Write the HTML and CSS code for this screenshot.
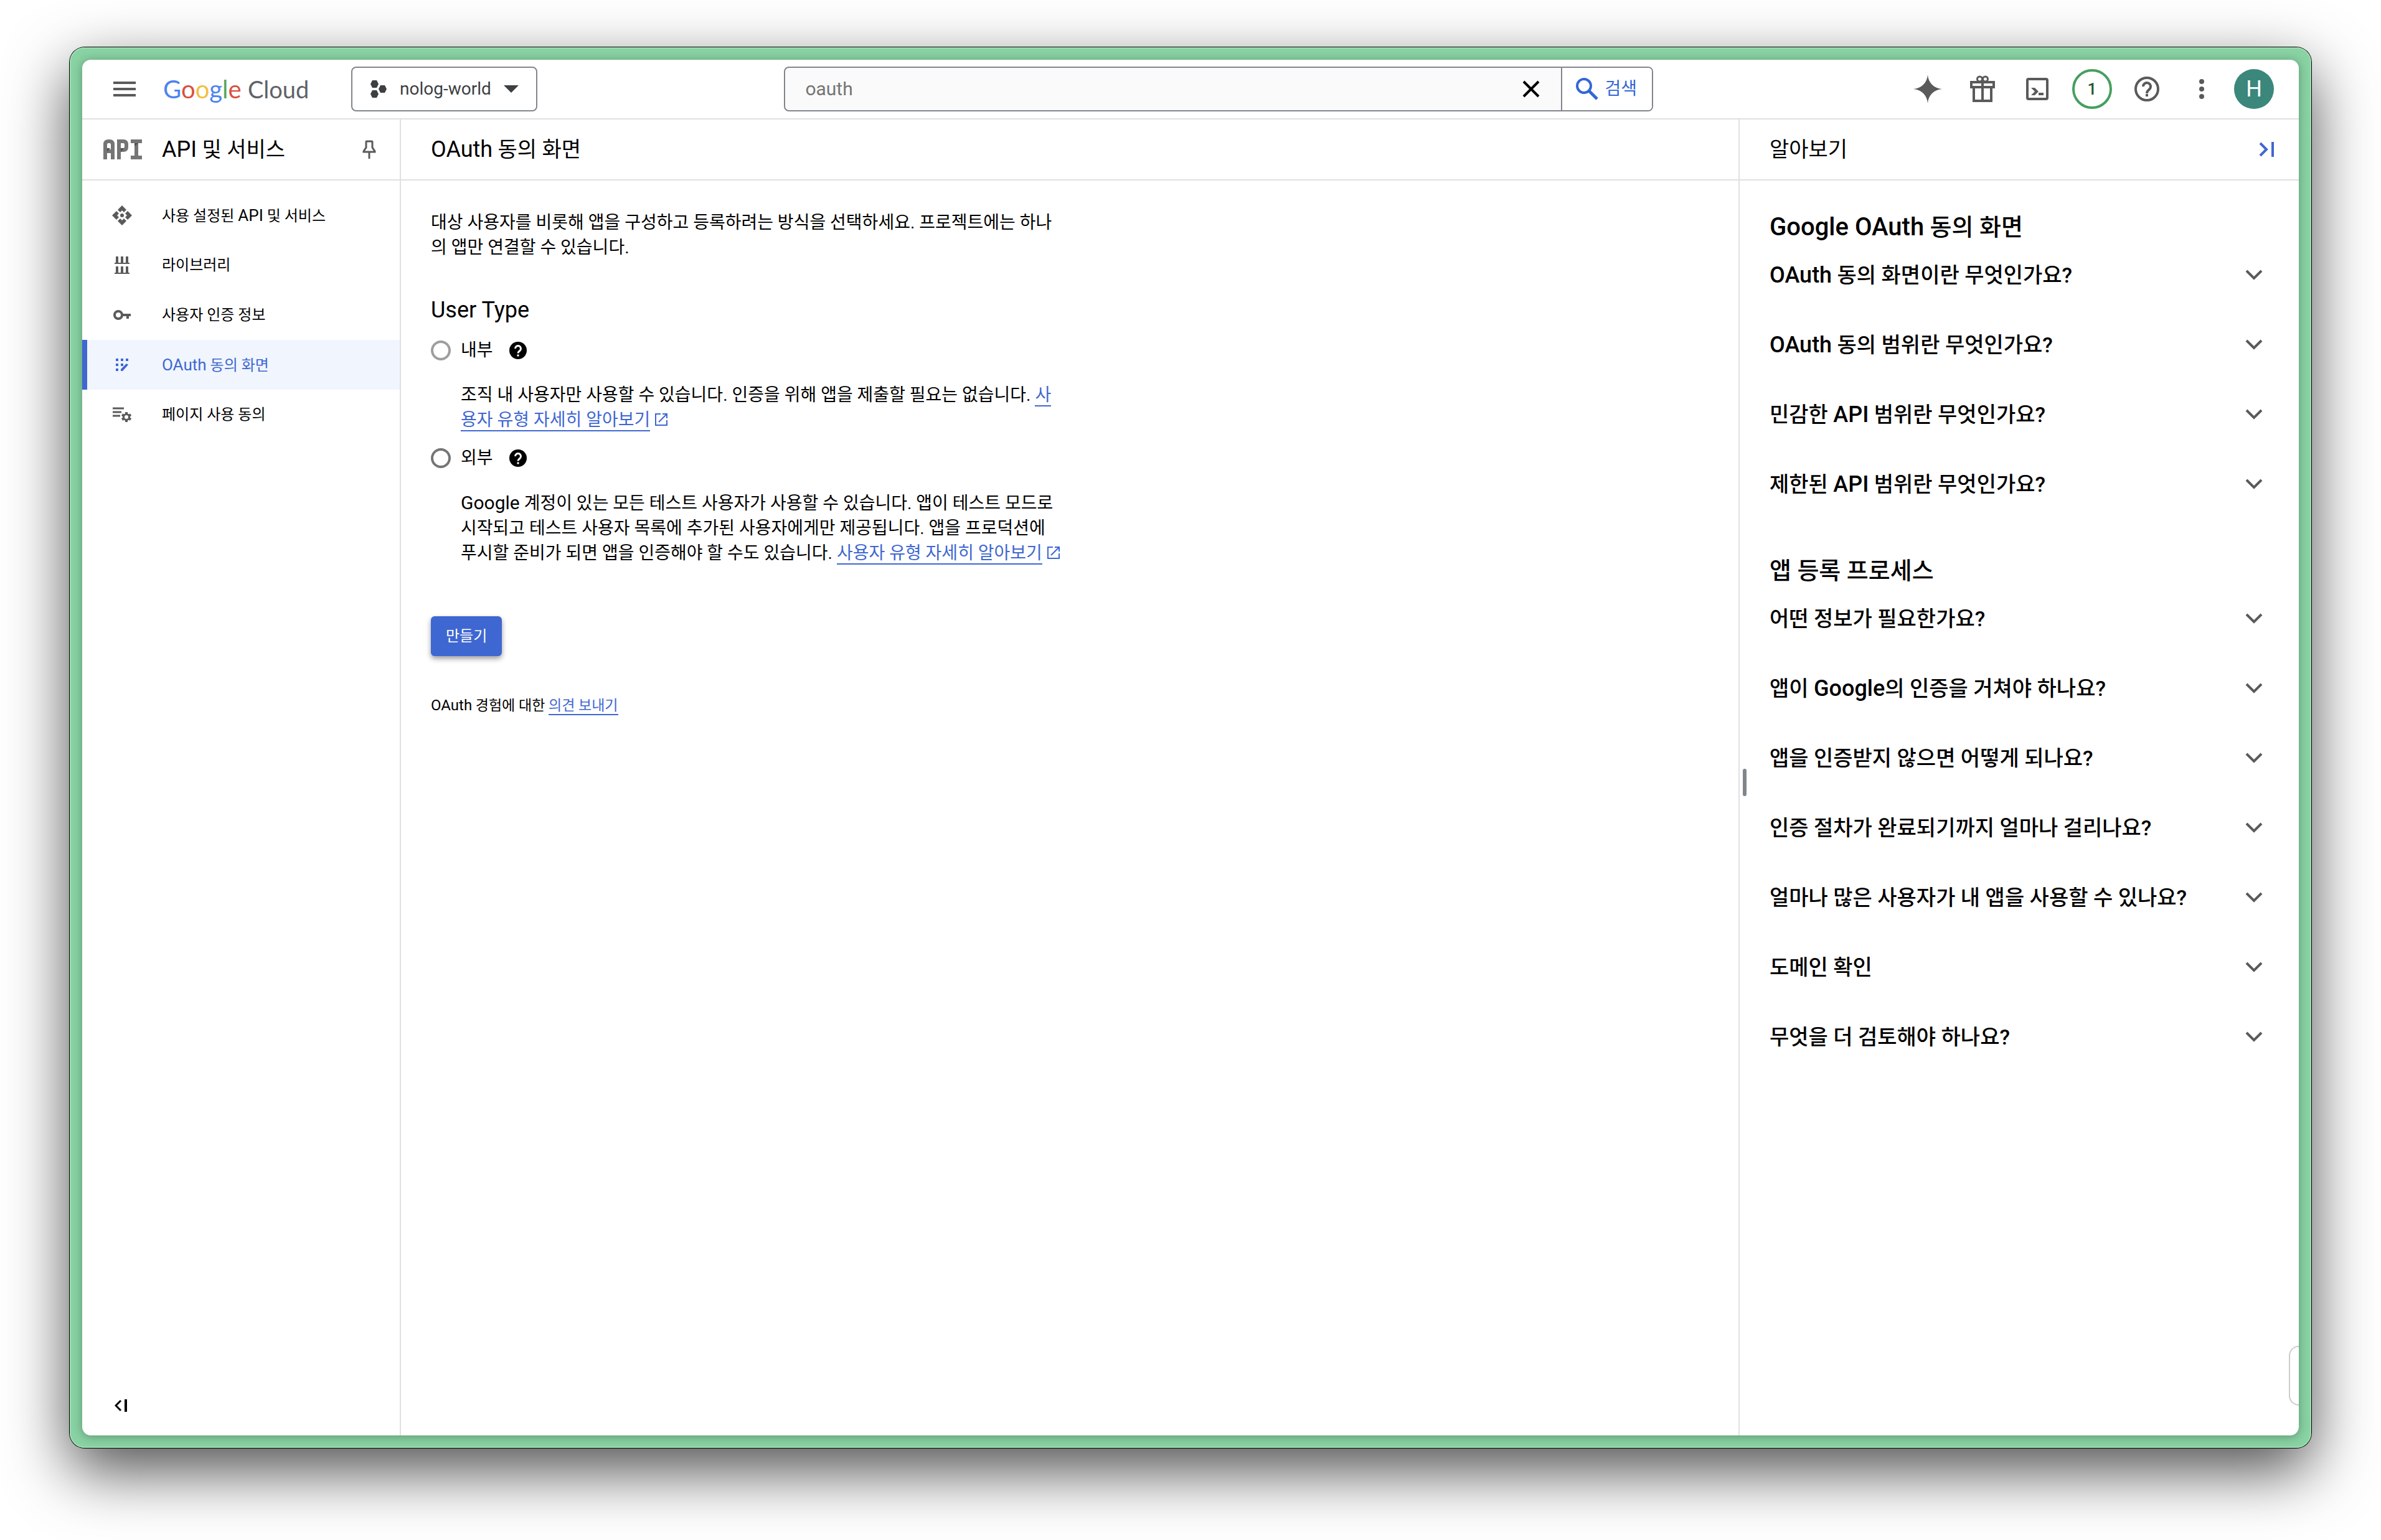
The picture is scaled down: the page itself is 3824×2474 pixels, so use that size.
FILE: index.html
```html
<!DOCTYPE html>
<html lang="ko">
<head>
<meta charset="utf-8">
<meta name="viewport" content="width=device-width, initial-scale=1">
<title>OAuth 동의 화면 – API 및 서비스</title>
<link rel="stylesheet" href="styles.css">
</head>
<body>
<svg class="defs" aria-hidden="true">
  <symbol id="chevron" viewBox="0 0 28 18"><path d="M2 2l12 12L26 2" fill="none" stroke="currentColor" stroke-width="4"/></symbol>
  <symbol id="external" viewBox="0 0 20 20"><path d="M9 1H1v18h18v-8M12 1h7v7M19 1L6 14" fill="none" stroke="currentColor" stroke-width="2"/></symbol>
  <symbol id="help-solid" viewBox="0 0 28 28"><circle cx="14" cy="14" r="14" fill="#000"/><path d="M9.500 11a4.500 4.500 0 1 1 7.300 3.500C15 16 14 16.600 14 18.500" fill="none" stroke="#fff" stroke-width="3"/><rect x="12.500" y="20.500" width="3" height="3" fill="#fff"/></symbol>
</svg>
<div class="window">
<div class="app">
  <header class="topbar">
    <button class="icon-button menu" aria-label="탐색 메뉴"><svg width="36" height="24" viewBox="0 0 36 24"><path d="M0 2h36M0 12h36M0 22h36" stroke="currentColor" stroke-width="4"/></svg></button>
    <a class="logo" href="#"><span class="g-blue">G</span><span class="g-red">o</span><span class="g-yellow">o</span><span class="g-blue">g</span><span class="g-green">l</span><span class="g-red">e</span> <span class="cloud">Cloud</span></a>
    <button class="project">
      <svg width="28" height="28" viewBox="0 0 28 28" fill="currentColor"><path d="M4 0h7l3 6-3 6H4L1 6zM4 16h7l3 6-3 6H4l-3-6zM17 8h7l3 6-3 6h-7l-3-6z"/></svg>
      <span class="project-name">nolog-world</span>
      <svg width="24" height="12" viewBox="0 0 24 12" fill="currentColor"><path d="M0 0h24L12 12z"/></svg>
    </button>
    <form class="search">
      <input class="search-input" type="text" aria-label="검색어" value="oauth">
      <button class="clear" type="button" aria-label="지우기"><svg width="28" height="28" viewBox="0 0 28 28"><path d="M2 2l24 24M26 2L2 26" stroke="currentColor" stroke-width="4"/></svg></button>
      <button class="search-button" type="button"><svg width="36" height="36" viewBox="0 0 36 36"><circle cx="13" cy="13" r="11" fill="none" stroke="currentColor" stroke-width="4"/><path d="M21 21l13 13" stroke="currentColor" stroke-width="5"/></svg>검색</button>
    </form>
    <nav class="tools" aria-label="도구">
      <button class="icon-button" aria-label="Gemini"><svg width="46" height="46" viewBox="0 0 46 46" fill="currentColor"><path d="M23 0c1 13 10 22 23 23-13 1-22 10-23 23C22 33 13 24 0 23 13 22 22 13 23 0z"/></svg></button>
      <button class="icon-button" aria-label="무료 체험"><svg width="40" height="44" viewBox="0 0 40 44" fill="none" stroke="currentColor" stroke-width="4"><path d="M2 11h36v8H2zM6 19v22h28V19M20 11v30"/><circle cx="15.500" cy="6" r="4" stroke-width="3"/><circle cx="24.500" cy="6" r="4" stroke-width="3"/></svg></button>
      <button class="icon-button" aria-label="Cloud Shell"><svg width="36" height="36" viewBox="0 0 36 36"><rect x="2" y="2" width="32" height="32" rx="2" fill="none" stroke="currentColor" stroke-width="4"/><path d="M8 16h6l6 6-6 6H8l6-6zM20 24h8v4h-8z" fill="currentColor"/></svg></button>
      <button class="icon-button" aria-label="알림 1개"><span class="badge">1</span></button>
      <button class="icon-button" aria-label="도움말"><svg width="40" height="40" viewBox="0 0 40 40" fill="none" stroke="currentColor" stroke-width="4"><circle cx="20" cy="20" r="18"/><path d="M14 16a6 6 0 1 1 10.500 4C22 22.500 20 23 20 27"/><path d="M18 30h4"/></svg></button>
      <button class="icon-button" aria-label="더보기"><svg width="8" height="32" viewBox="0 0 8 32" fill="currentColor"><circle cx="4" cy="4" r="4"/><circle cx="4" cy="16" r="4"/><circle cx="4" cy="28" r="4"/></svg></button>
      <button class="avatar" aria-label="계정">H</button>
    </nav>
  </header>
  <div class="body">
    <aside class="sidebar">
      <div class="bar sidebar-head">
        <svg class="api-mark" width="62" height="32" viewBox="0 0 62 32"><path d="M3 32V8q0-5 5-5h2q5 0 5 5v24M3 19h12M25 32V3h7q5 0 5 5v4q0 5-5 5h-7M44 3h18M44 29h18M53 3v26" fill="none" stroke="#757575" stroke-width="6"/><path d="M6 14h5l-5 6zM28 14h5l-5 6zM50 6h6l-6 5z" fill="#4f4f4f"/></svg>
        <h2 class="bar-title"><span class="latin">API</span> 및 서비스</h2>
        <button class="plain pin" aria-label="고정"><svg width="22" height="30" viewBox="0 0 22 30" fill="none" stroke="currentColor" stroke-width="3"><path d="M7 2h8q1 0 1 1v9l4 6v1H2v-1l4-6V3q0-1 1-1zM11 19v11"/></svg></button>
      </div>
      <nav class="menu-list">
        <a class="item" href="#"><span class="item-icon"><svg width="32" height="32" viewBox="0 0 32 32" fill="currentColor"><path d="M16 0l7 7-4 4-3-3-3 3-4-4zM16 32l7-7-4-4-3 3-3-3-4 4zM0 16l7-7 4 4-3 3 3 3-4 4zM32 16l-7-7-4 4 3 3-3 3 4 4z"/><circle cx="16" cy="16" r="3"/></svg></span><span>사용 설정된 <span class="latin">API</span> 및 서비스</span></a>
        <a class="item" href="#"><span class="item-icon"><svg width="24" height="28" viewBox="0 0 24 28" fill="none" stroke="currentColor"><path d="M4 0v11M12 0v11M20 0v11M4 16v11M12 16v11M20 16v11" stroke-width="4"/><path d="M0 11h24M0 27h24" stroke-width="2"/></svg></span><span>라이브러리</span></a>
        <a class="item" href="#"><span class="item-icon"><svg width="28" height="16" viewBox="0 0 28 16" fill="none" stroke="currentColor" stroke-width="4"><circle cx="8" cy="8" r="6"/><path d="M14 8h14M23 8v6" /></svg></span><span>사용자 인증 정보</span></a>
        <a class="item active" href="#" aria-current="page"><span class="item-icon"><svg width="20" height="20" viewBox="0 0 20 20" fill="currentColor"><path d="M0 0h4v4H0zM8 0h4v4H8zM16 0h4v4h-4zM0 8h4v4H0zM8 8h4v4H8zM0 16h4v4H0zM8 20v-3l9-9 3 2L11 20z"/></svg></span><span><span class="latin">OAuth</span> 동의 화면</span></a>
        <a class="item" href="#"><span class="item-icon"><svg width="30" height="24" viewBox="0 0 30 24" fill="none" stroke="currentColor"><path d="M0 2h18M0 8h14M0 14h12" stroke-width="3"/><circle cx="22" cy="16" r="4.500" stroke-width="3"/><path d="M22 8v4M22 20v4M15 12l3 2M26 18l3 2M15 20l3-2M26 14l3-2" stroke-width="4"/></svg></span><span>페이지 사용 동의</span></a>
      </nav>
      <button class="plain collapse" aria-label="탐색 메뉴 접기"><svg width="20" height="20" viewBox="0 0 20 20" fill="none" stroke="currentColor"><path d="M10 2l-8 8 8 8" stroke-width="3"/><path d="M18 0v20" stroke-width="4"/></svg></button>
    </aside>
    <main class="main">
      <div class="bar"><h1 class="bar-title"><span class="latin">OAuth</span> 동의 화면</h1></div>
      <div class="content">
        <p class="text">대상 사용자를 비롯해 앱을 구성하고 등록하려는 방식을 선택하세요. 프로젝트에는 하나의 앱만 연결할 수 있습니다.</p>
        <fieldset class="types">
          <legend class="legend">User Type</legend>
          <div class="choice">
            <input class="radio" type="radio" name="type" id="internal" disabled><label for="internal">내부</label>
            <svg class="hint" width="28" height="28"><use href="#help-solid"/></svg>
          </div>
          <p class="text detail">조직 내 사용자만 사용할 수 있습니다. 인증을 위해 앱을 제출할 필요는 없습니다. <a class="link" href="#">사용자 유형 자세히 알아보기</a><svg class="external" width="20" height="20"><use href="#external"/></svg></p>
          <div class="choice">
            <input class="radio" type="radio" name="type" id="external-type"><label for="external-type">외부</label>
            <svg class="hint" width="28" height="28"><use href="#help-solid"/></svg>
          </div>
          <p class="text detail"><span class="latin">Google</span> 계정이 있는 모든 테스트 사용자가 사용할 수 있습니다. 앱이 테스트 모드로 시작되고 테스트 사용자 목록에 추가된 사용자에게만 제공됩니다. 앱을 프로덕션에 푸시할 준비가 되면 앱을 인증해야 할 수도 있습니다. <a class="link" href="#">사용자 유형 자세히 알아보기</a><svg class="external" width="20" height="20"><use href="#external"/></svg></p>
        </fieldset>
        <button class="create">만들기</button>
        <p class="feedback"><span class="latin">OAuth</span> 경험에 대한 <a class="link" href="#">의견 보내기</a></p>
      </div>
    </main>
    <aside class="learn">
      <div class="bar learn-head"><h2 class="bar-title">알아보기</h2>
        <button class="plain hide" aria-label="패널 숨기기"><svg width="24" height="24" viewBox="0 0 24 24" fill="none" stroke="currentColor" stroke-width="4"><path d="M2 2l10 10L2 22M22 0v24"/></svg></button></div>
      <section class="topic">
        <h3 class="topic-title"><span class="latin">Google OAuth</span> 동의 화면</h3>
        <div class="questions">
          <button class="question"><span><span class="latin">OAuth</span> 동의 화면이란 무엇인가요?</span><svg width="28" height="18"><use href="#chevron"/></svg></button>
          <button class="question"><span><span class="latin">OAuth</span> 동의 범위란 무엇인가요?</span><svg width="28" height="18"><use href="#chevron"/></svg></button>
          <button class="question"><span>민감한 <span class="latin">API</span> 범위란 무엇인가요?</span><svg width="28" height="18"><use href="#chevron"/></svg></button>
          <button class="question"><span>제한된 <span class="latin">API</span> 범위란 무엇인가요?</span><svg width="28" height="18"><use href="#chevron"/></svg></button>
        </div>
      </section>
      <section class="topic">
        <h3 class="topic-title">앱 등록 프로세스</h3>
        <div class="questions">
          <button class="question"><span>어떤 정보가 필요한가요?</span><svg width="28" height="18"><use href="#chevron"/></svg></button>
          <button class="question"><span>앱이 <span class="latin">Google</span>의 인증을 거쳐야 하나요?</span><svg width="28" height="18"><use href="#chevron"/></svg></button>
          <button class="question"><span>앱을 인증받지 않으면 어떻게 되나요?</span><svg width="28" height="18"><use href="#chevron"/></svg></button>
          <button class="question"><span>인증 절차가 완료되기까지 얼마나 걸리나요?</span><svg width="28" height="18"><use href="#chevron"/></svg></button>
          <button class="question"><span>얼마나 많은 사용자가 내 앱을 사용할 수 있나요?</span><svg width="28" height="18"><use href="#chevron"/></svg></button>
          <button class="question"><span>도메인 확인</span><svg width="28" height="18"><use href="#chevron"/></svg></button>
          <button class="question"><span>무엇을 더 검토해야 하나요?</span><svg width="28" height="18"><use href="#chevron"/></svg></button>
        </div>
      </section>
      <span class="resize-handle"></span>
      <span class="side-tab"></span>
    </aside>
  </div>
</div>
</div>
</body>
</html>
```
FILE: styles.css
```css
* { box-sizing: border-box; }
body {
  margin: 0;
  min-height: 100vh;
  padding: 76px 112px 148px;
  display: flex;
  background: #fff;
  color: #000;
  font-family: Roboto, "Noto Sans CJK KR", sans-serif;
  font-size: 28px;
  line-height: 40px;
}
h1, h2, h3, p, fieldset, legend { margin: 0; padding: 0; border: 0; font-weight: 400; }
button { margin: 0; padding: 0; border: 0; background: none; color: inherit; font: inherit; }
a { color: inherit; text-decoration: none; }
svg { display: block; flex: none; }
.defs { position: absolute; width: 0; height: 0; }

.window {
  flex: 1;
  display: flex;
  padding: 20px;
  border-radius: 24px;
  background: #88d2a3;
  box-shadow: 0 0 0 1px #000, inset 0 0 0 2px #9edcb3, 0 36px 100px rgba(0, 0, 0, .7);
}
.app {
  flex: 1;
  display: flex;
  flex-direction: column;
  min-width: 0;
  border-radius: 14px;
  background: #fff;
  box-shadow: 0 2px 16px rgba(0, 0, 0, .3);
  overflow: hidden;
}

.topbar {
  display: grid;
  grid-template-columns: auto auto auto 1fr auto;
  align-items: center;
  height: 96px;
  padding: 0 40px 0 24px;
  border-bottom: 2px solid #e0e0e0;
}
.icon-button { width: 88px; height: 88px; display: grid; place-items: center; color: #5a5a5a; }
.logo { margin-left: 18px; width: 240px; font: 40px/48px Lato, sans-serif; white-space: nowrap; }
.g-blue { color: #4d84f0; }
.g-red { color: #d9503f; }
.g-yellow { color: #f2bf42; }
.g-green { color: #58a55c; }
.cloud { color: #5f6368; font-size: 38px; }
.project {
  display: flex;
  align-items: center;
  height: 72px;
  margin-left: 62px;
  padding: 0 28px;
  border: 2px solid #80868b;
  border-radius: 8px;
  color: #3c4043;
}
.project-name { margin: 0 20px; }
.search {
  display: flex;
  justify-self: center;
  width: 1396px;
  height: 72px;
  border: 2px solid #80868b;
  border-radius: 8px;
  background: #fafafa;
  overflow: hidden;
}
.search-input { flex: 1; min-width: 0; padding: 0 32px; border: 0; background: none; color: #757575; font: 30px/40px Roboto, sans-serif; }
.clear { width: 96px; display: grid; place-items: center; }
.search-button { display: flex; align-items: center; gap: 10px; width: 146px; padding-left: 22px; border-left: 2px solid #80868b; background: #fff; color: #3367d6; }
.tools { display: flex; align-items: center; }
.badge { width: 64px; height: 64px; border: 4px solid #469f5e; border-radius: 50%; color: #1e5b2c; font-size: 26px; font-weight: 500; line-height: 56px; }
.avatar { width: 64px; height: 64px; margin-left: 8px; border-radius: 50%; background: #3b877b; color: #fff; font-size: 36px; line-height: 64px; }

.body { flex: 1; display: grid; grid-template-columns: 512px 1fr 900px; }
.bar { display: flex; align-items: center; height: 98px; padding: 0 48px; border-bottom: 2px solid #e0e0e0; }
.bar-title { font-size: 34px; line-height: 48px; }
.bar-title .latin { font-size: 36px; }
.sidebar { display: flex; flex-direction: column; border-right: 2px solid #e0e0e0; }
.sidebar-head { padding: 0 38px 0 34px; }
.api-mark { margin-right: 32px; }
.pin { margin-left: auto; color: #5a5a5a; }
.menu-list { flex: 1; padding-top: 16px; }
.item { display: flex; align-items: center; height: 80px; border-left: 8px solid transparent; font-size: 24px; }
.item .latin { font-size: 26px; }
.item-icon { width: 112px; margin-right: 8px; display: grid; place-items: center; color: #5a5a5a; }
.active { border-color: #3f67d1; background: #f0f5fe; color: #3f67d1; }
.active .item-icon { color: inherit; }
.collapse { align-self: flex-start; margin: 0 52px 38px; }

.main { min-width: 0; }
.content { padding: 48px; }
.text { max-width: 1016px; }
.text .latin { font-size: 30px; }
.types { margin-top: 56px; }
.legend { font-size: 36px; line-height: 48px; }
.choice { display: flex; align-items: center; height: 32px; margin-top: 25px; }
.radio { appearance: none; width: 32px; height: 32px; margin: 0 16px 0 0; border: 4px solid #757575; border-radius: 50%; }
.radio:disabled { border-color: #9e9e9e; }
.hint { margin-left: 26px; }
.detail { margin-top: 36px; padding-left: 48px; }
.link { border-bottom: 2px solid #3f67d1; color: #3f67d1; }
.external { display: inline-block; margin-left: 8px; color: #3f67d1; }
.create { display: block; height: 64px; margin-top: 81px; padding: 0 24px; border-radius: 6px; background: #3f67d1; color: #fff; font-size: 24px; box-shadow: 0 4px 8px rgba(0, 0, 0, .4); }
.feedback { margin-top: 59px; font-size: 23px; }
.feedback .latin { font-size: 24px; }

.learn { position: relative; border-left: 2px solid #e0e0e0; }
.learn-head { justify-content: space-between; padding-right: 40px; }
.hide { color: #3f67d1; }
.topic { padding: 51px 58px 40px 48px; }
.topic-title { font-size: 38px; font-weight: 500; line-height: 48px; }
.topic-title .latin { font-size: 40px; }
.questions { display: flex; flex-direction: column; gap: 64px; margin-top: 29px; }
.question { display: flex; align-items: center; justify-content: space-between; font-size: 34px; font-weight: 500; line-height: 48px; text-align: left; }
.question .latin { font-size: 36px; }
.question svg { color: #5a5a5a; }
.resize-handle { position: absolute; left: 5px; top: 1043px; width: 6px; height: 44px; border-radius: 3px; background: #80868b; }
.side-tab { position: absolute; right: 0; bottom: 48px; width: 16px; height: 96px; border: 2px solid #ccc; border-right: 0; border-radius: 16px 0 0 16px; }
```
